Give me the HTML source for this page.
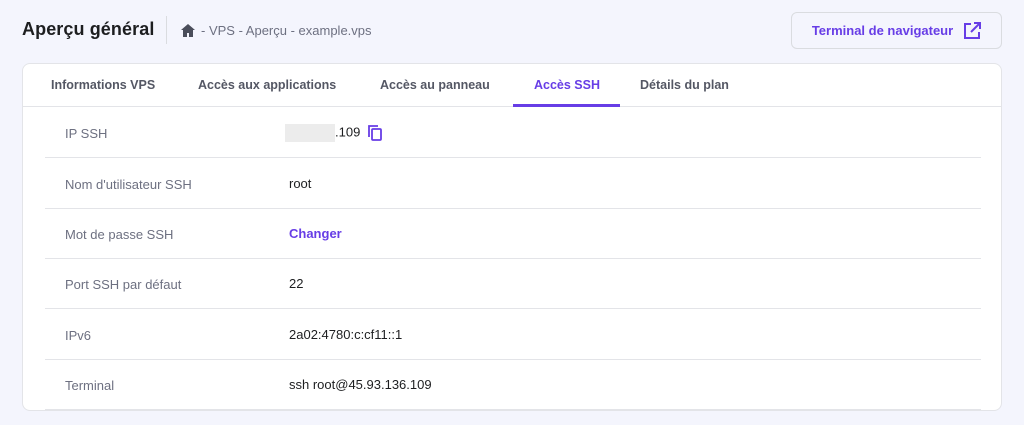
<!DOCTYPE html>
<html><head><meta charset="utf-8"><style>
*{box-sizing:border-box;margin:0;padding:0}
body{width:1024px;height:425px;background:#f4f5fd;font-family:"Liberation Sans",sans-serif;position:relative;overflow:hidden;color:#2f1c6a}
.title{position:absolute;left:22px;top:19px;font-size:18px;font-weight:bold;color:#1d1e20;letter-spacing:0.1px}
.sep{position:absolute;left:166px;top:16px;width:1px;height:28px;background:#dadce0}
.bc{position:absolute;left:181px;top:23px;font-size:13px;color:#6d7081;display:flex;align-items:center;gap:6px}
.btn{position:absolute;left:791px;top:12px;width:211px;height:37px;border:1px solid #dadce0;border-radius:6px;background:#f4f5fd;color:#673de6;font-weight:bold;font-size:13px;display:flex;align-items:center;justify-content:center;gap:10px}
.card{position:absolute;left:22px;top:63px;width:980px;height:348px;background:#fff;border:1px solid #e3e4e8;border-radius:8px;overflow:hidden}
.tabs{height:43px;border-bottom:1px solid #e3e4e8;position:relative}
.tab{position:absolute;top:14px;font-size:12.5px;font-weight:bold;color:#545764}
.tab.a{color:#673de6}
.ul{position:absolute;left:490px;top:40px;width:107px;height:3px;background:#673de6}
.row{position:absolute;left:22px;width:936px;height:50px;border-bottom:1px solid #e3e4e8;font-size:13px}
.row .l{position:absolute;left:20px;top:18px;color:#6d7081}
.row .v{position:absolute;left:244px;top:17px;color:#1d1e20}
</style></head><body>
<div class="title">Aperçu général</div>
<div class="sep"></div>
<div class="bc"><svg width="14" height="13" viewBox="0 0 14 13"><path d="M7 0L0 6h2v7h4V9h2v4h4V6h2z" fill="#4a4d5a"/></svg><span>- VPS - Aperçu - example.vps</span></div>
<div class="btn">Terminal de navigateur <svg width="18" height="18" viewBox="0 0 18 18" fill="none" stroke="#673de6" stroke-width="2"><path d="M8 2H2v14h14v-6M11 1h6v6M17 1L8 10"/></svg></div>
<div class="card">
<div class="tabs">
<span class="tab" style="left:28px">Informations VPS</span>
<span class="tab" style="left:175px">Accès aux applications</span>
<span class="tab" style="left:357px">Accès au panneau</span>
<span class="tab a" style="left:511px">Accès SSH</span>
<span class="tab" style="left:617px">Détails du plan</span>
<div class="ul"></div>
</div>
<div class="row" style="top:44px"><span class="l">IP SSH</span><span class="v" style="top:16px"><span style="display:inline-block;width:50px;height:18px;background:#ececec;vertical-align:middle;margin-left:-4px"></span>.109 <svg width="14" height="16" viewBox="0 0 14 16" style="vertical-align:middle;margin-left:4px" fill="none" stroke="#673de6" stroke-width="1.8"><rect x="4" y="4" width="9" height="11" rx="1"/><path d="M1 12V1h9"/></svg></span></div>
<div class="row" style="top:95px"><span class="l">Nom d'utilisateur SSH</span><span class="v">root</span></div>
<div class="row" style="top:145px"><span class="l">Mot de passe SSH</span><span class="v" style="color:#673de6;font-weight:bold">Changer</span></div>
<div class="row" style="top:195px"><span class="l">Port SSH par défaut</span><span class="v">22</span></div>
<div class="row" style="top:246px"><span class="l">IPv6</span><span class="v">2a02:4780:c:cf11::1</span></div>
<div class="row" style="top:296px"><span class="l">Terminal</span><span class="v">ssh root@45.93.136.109</span></div>
</div>
</body></html>
